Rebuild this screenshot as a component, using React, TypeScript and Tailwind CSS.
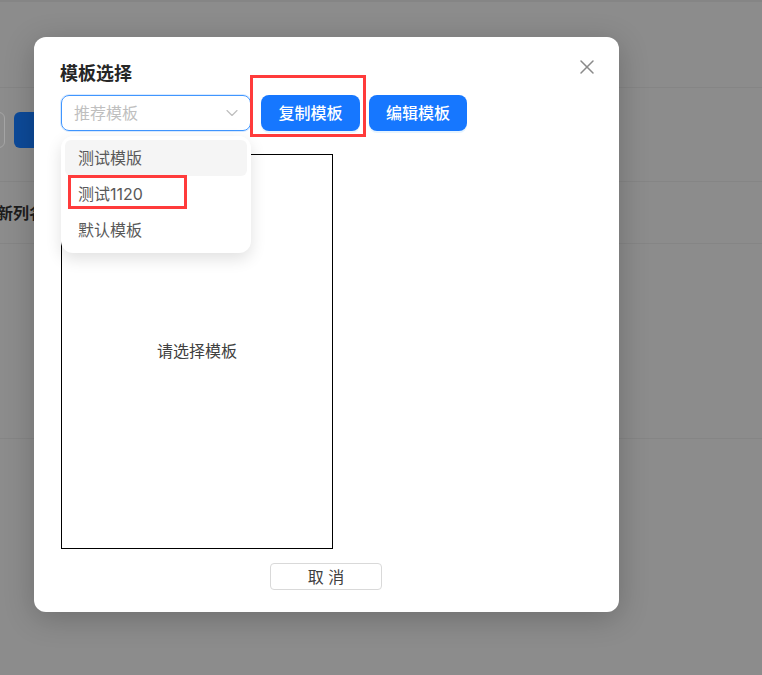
import { ChevronDown, X } from 'lucide-react';

const cjk = "font-['Inter','Noto_Sans_CJK_SC',sans-serif]";

function Backdrop() {
    return (
        <div className="h-[675px] w-[762px] overflow-hidden bg-[#8c8c8c]">
            <div className="h-[88px] border-b border-[#858585] border-t-2 border-t-[#858585]"></div>
            <div className="flex h-[94px] items-start gap-[9px] border-b border-[#858585] pt-6">
                <div className="ml-[-20px] h-9 w-[25px] rounded-md border border-[#a5a5a5]"></div>
                <div className="h-9 w-10 rounded-md bg-[#0d4a99]"></div>
            </div>
            <div className="flex h-[62px] items-center overflow-hidden border-b border-[#858585]">
                <span className="ml-[-3px] text-base font-bold text-[#1c1c1c]">新列名</span>
            </div>
            <div className="h-[195px] border-b border-[#858585]"></div>
        </div>
    );
}

function Dropdown() {
    return (
        <div className="absolute left-[27px] top-[99px] z-10 w-[190px] rounded-xl bg-white p-1 pb-[5px] text-base text-[#595959] shadow-[0_6px_16px_rgba(0,0,0,0.12)]">
            <div className="flex h-9 items-center rounded-md bg-[#f5f5f5] px-[13px]">测试模版</div>
            <div className="flex h-9 items-center px-[13px]">测试1120</div>
            <div className="flex h-9 items-center px-[13px]">默认模板</div>
        </div>
    );
}

export default function App() {
    return (
        <main className={`relative h-[675px] w-[762px] overflow-hidden ${cjk}`}>
            <Backdrop />

            <div className="absolute left-[34px] top-[37px] flex h-[575px] w-[585px] flex-col rounded-xl bg-white pl-[27px] pt-[25px] shadow-[0_6px_30px_rgba(0,0,0,0.22)]">
                <X className="absolute right-[20px] top-[18px] h-6 w-6 text-[#8a8a8a]" strokeWidth={1.5} />

                <h2 className="ml-[-1px] h-[33px] text-lg font-bold leading-6 text-[#262626]">模板选择</h2>

                <div className="flex items-center">
                    <div className="flex h-9 w-[190px] items-center justify-between rounded-lg border border-[#4096ff] pl-3 pr-[8px] text-base text-[#bfbfbf] shadow-[0_0_0_1px_rgba(64,150,255,0.2)]">
                        <span>推荐模板</span>
                        <ChevronDown className="h-5 w-5 text-[#bfbfbf]" strokeWidth={1.4} />
                    </div>
                    <button className="ml-[10px] h-9 w-[99px] rounded-lg bg-[#1677ff] text-base font-medium text-white shadow-[0_2px_0_rgba(5,145,255,0.1)]">复制模板</button>
                    <button className="ml-[9px] h-9 w-[98px] rounded-lg bg-[#1677ff] text-base font-medium text-white shadow-[0_2px_0_rgba(5,145,255,0.1)]">编辑模板</button>
                </div>

                <Dropdown />

                <div className="mt-[23px] flex h-[395px] w-[272px] items-center justify-center border border-black pb-[2px] text-base text-[#404040]">
                    请选择模板
                </div>

                <button className="ml-[209px] mt-[14px] h-[27px] w-[112px] rounded border border-[#d9d9d9] bg-white text-base leading-none text-[#404040]">取 消</button>
            </div>

            {/* red annotation boxes */}
            <div className="absolute left-[250px] top-[75px] z-20 h-[62px] w-[116px] border-[3px] border-[#ff3b3b]"></div>
            <div className="absolute left-[68px] top-[175px] z-20 h-[34px] w-[119px] border-[3px] border-[#ff3b3b]"></div>
        </main>
    );
}
